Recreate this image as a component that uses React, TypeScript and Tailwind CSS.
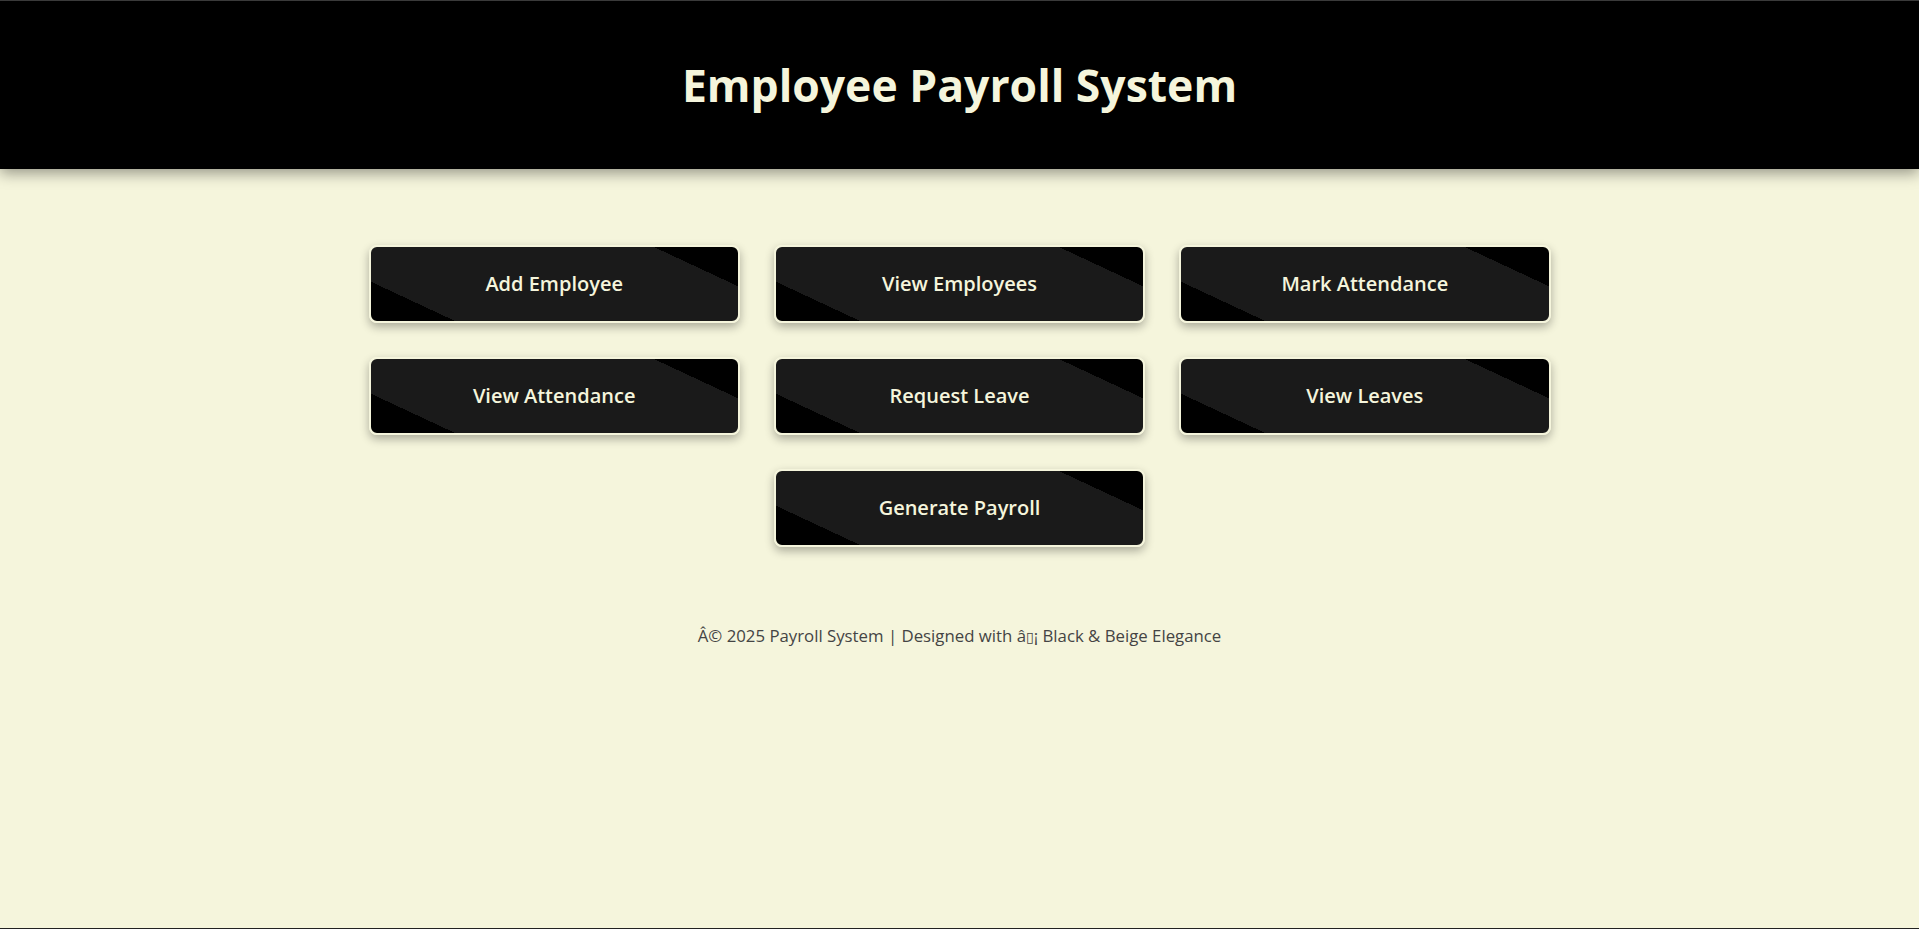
const actions = [
  "Add Employee",
  "View Employees",
  "Mark Attendance",
  "View Attendance",
  "Request Leave",
  "View Leaves",
]

const font = { fontFamily: '"Open Sans", "Noto Sans", Arial, sans-serif' }

function ActionButton({ label, className = "" }: { label: string; className?: string }) {
  return (
    <button
      className={`h-[78px] rounded-lg border-2 border-[#f5f5dc] bg-[linear-gradient(25deg,#000_16%,#1a1a1a_16%,#1a1a1a_84%,#000_84%)] text-[20px] font-semibold text-[#f5f5dc] shadow-[0_4px_10px_rgba(0,0,0,0.3)] ${className}`}
    >
      {label}
    </button>
  )
}

export default function App() {
  return (
    <div className="min-h-screen bg-[#f5f5dc] border-b border-[#222]" style={font}>
      {/* Header */}
      <header className="h-[169px] flex items-center justify-center bg-black border-t border-[#3a3a3a] shadow-[0_4px_14px_rgba(0,0,0,0.4)]">
        <h1 className="text-[44.5px] font-bold text-[#f5f5dc]">Employee Payroll System</h1>
      </header>

      {/* Actions */}
      <main className="pt-[76px] flex justify-center">
        <div className="w-[1182px] grid grid-cols-3 gap-[34px]">
          {actions.map((label) => (
            <ActionButton key={label} label={label} />
          ))}
          <ActionButton label="Generate Payroll" className="col-start-2" />
        </div>
      </main>

      {/* Footer */}
      <footer className="pt-[76px] text-center text-[16.8px] text-[#444]">
        <p>
          Â© 2025 Payroll System | Designed with â
          <span style={{ fontFamily: '"DejaVu Sans", sans-serif' }} className="text-[14px]">{"\u25AF"}</span>¡ Black &amp; Beige Elegance
        </p>
      </footer>
    </div>
  )
}
